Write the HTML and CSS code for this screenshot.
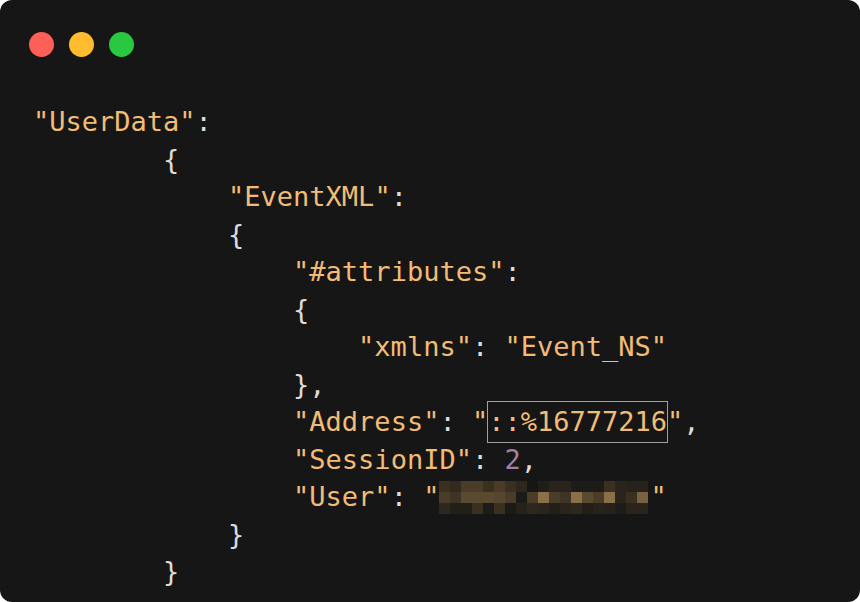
FILE: index.html
```html
<!DOCTYPE html>
<html>
<head>
<meta charset="utf-8">
<link rel="stylesheet" href="styles.css">
</head>
<body>
<div class="card">
  <div class="dots">
    <span class="dot red"></span>
    <span class="dot yellow"></span>
    <span class="dot green"></span>
  </div>
  <div class="code">
<div class="ln"><span class="s">"UserData"</span>:</div>
<div class="ln">        {</div>
<div class="ln">            <span class="s">"EventXML"</span>:</div>
<div class="ln">            {</div>
<div class="ln">                <span class="s">"#attributes"</span>:</div>
<div class="ln">                {</div>
<div class="ln">                    <span class="s">"xmlns"</span>: <span class="s">"Event_NS"</span></div>
<div class="ln">                },</div>
<div class="ln">                <span class="s">"Address"</span>: <span class="s">"<span class="hl">::%16777216</span>"</span>,</div>
<div class="ln">                <span class="s">"SessionID"</span>: <span class="n">2</span>,</div>
<div class="ln">                <span class="s">"User"</span>: <span class="s">"</span><span class="px"><i style="background:#3a3020"></i><i style="background:#332a1e"></i><i style="background:#4a3c28"></i><i style="background:#4a3c28"></i><i style="background:#3a3020"></i><i style="background:#4a3c28"></i><i style="background:#3a3020"></i><i style="background:#2e271c"></i><i style="background:#171614"></i><i style="background:#211d18"></i><i style="background:#2a241c"></i><i style="background:#2a241c"></i><i style="background:#1e1c19"></i><i style="background:#1e1c19"></i><i style="background:#1e1c19"></i><i style="background:#3a3020"></i><i style="background:#2a241c"></i><i style="background:#26221c"></i><i style="background:#26221c"></i><i style="background:#4a3c28"></i><i style="background:#3f3424"></i><i style="background:#5a4a30"></i><i style="background:#5a4a30"></i><i style="background:#5a4a30"></i><i style="background:#56462e"></i><i style="background:#4a3c28"></i><i style="background:#1c1a17"></i><i style="background:#4a3c28"></i><i style="background:#8a7048"></i><i style="background:#4a3c28"></i><i style="background:#3f3424"></i><i style="background:#8a7048"></i><i style="background:#5a4a30"></i><i style="background:#4a3c28"></i><i style="background:#8a7048"></i><i style="background:#2a241c"></i><i style="background:#3a3020"></i><i style="background:#7a6240"></i><i style="background:#2e271c"></i><i style="background:#221e18"></i><i style="background:#221e18"></i><i style="background:#3a3020"></i><i style="background:#1e1c19"></i><i style="background:#3a3020"></i><i style="background:#1c1a17"></i><i style="background:#262119"></i><i style="background:#2e271c"></i><i style="background:#2a241c"></i><i style="background:#221e18"></i><i style="background:#2a241c"></i><i style="background:#2e271c"></i><i style="background:#221e18"></i><i style="background:#26221c"></i><i style="background:#262119"></i><i style="background:#1e1c19"></i><i style="background:#2a241c"></i><i style="background:#2a241c"></i></span><span class="s">"</span></div>
<div class="ln">            }</div>
<div class="ln">        }</div>
  </div>
</div>
</body>
</html>
```

FILE: styles.css
```css
html, body {
  margin: 0;
  padding: 0;
  background: #ffffff;
}
.card {
  width: 860px;
  height: 602px;
  background: #161616;
  border-radius: 12px;
  overflow: hidden;
  box-sizing: border-box;
  padding-top: 32px;
}
.dots {
  display: flex;
  gap: 15px;
  padding-left: 28.5px;
  height: 25px;
}
.dot {
  width: 25px;
  height: 25px;
  border-radius: 50%;
  display: block;
}
.red { background: #fe5f57; }
.yellow { background: #febc2e; }
.green { background: #28c840; }
.code {
  margin-top: 46px;
  padding-left: 33px;
  font-family: "DejaVu Sans Mono", monospace;
  font-size: 27px;
  line-height: 37.5px;
  color: #dcdcdc;
}
.ln {
  white-space: pre;
  height: 37.5px;
}
.s { color: #f2bc77; }
.n { color: #a97f9e; }
.hl {
  outline: 1.5px solid #a0a0a0;
  outline-offset: 0;
  display: inline-block;
  line-height: 40px;
  height: 40px;
  vertical-align: top;
  margin-top: -1.5px;
}
.px {
  display: inline-grid;
  grid-template-columns: repeat(19, 11px);
  grid-template-rows: repeat(3, 11px);
  width: 211px;
  vertical-align: top;
  margin-top: 3px;
}
.px i {
  display: block;
}
```
